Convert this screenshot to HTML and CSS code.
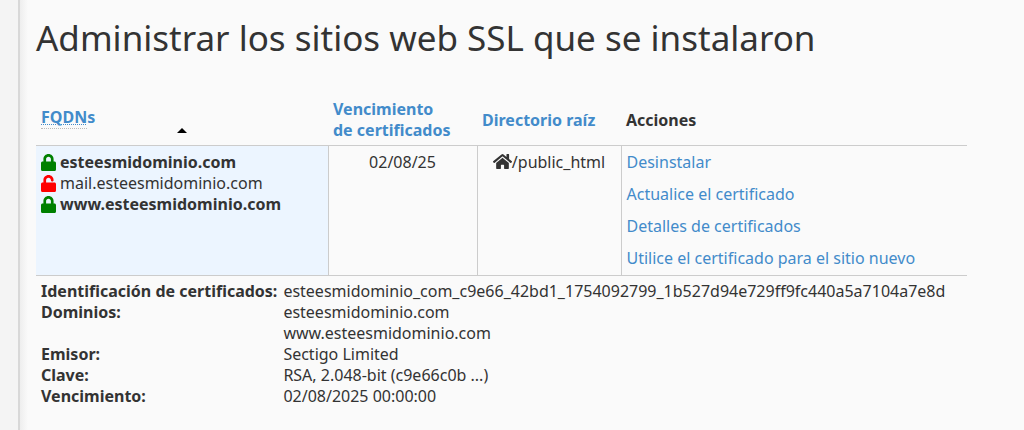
FILE: index.html
```html
<!DOCTYPE html>
<html lang="es">
<head>
  <meta charset="UTF-8">
  <title>Administrar los sitios web SSL</title>
  <link rel="stylesheet" href="styles.css">
</head>
<body>
  <!-- shared icons -->
  <svg class="sprite" aria-hidden="true">
    <symbol id="lock" viewBox="0 0 448 512" preserveAspectRatio="none">
      <path d="M400 224h-24v-72C376 68.200 307.800 0 224 0S72 68.200 72 152v72H48c-26.500 0-48 21.500-48 48v192c0 26.500 21.500 48 48 48h352c26.500 0 48-21.500 48-48V272c0-26.500-21.500-48-48-48zm-104 0H152v-72c0-39.700 32.300-72 72-72s72 32.300 72 72v72z"/>
    </symbol>
    <symbol id="unlock" viewBox="0 0 448 512" preserveAspectRatio="none">
      <path d="M400 224H152v-71c0-39.600 31.700-72.500 71.300-73 40-.5 72.700 32 72.700 72v16c0 13.300 10.700 24 24 24h32c13.300 0 24-10.700 24-24v-16C376 68 307.500-.3 223.500 0 139.500.3 72 69.500 72 153.500V224H48c-26.500 0-48 21.500-48 48v192c0 26.500 21.500 48 48 48h352c26.500 0 48-21.500 48-48V272c0-26.500-21.500-48-48-48z"/>
    </symbol>
    <symbol id="home" viewBox="0 0 576 512">
      <path d="M280.400 148.300 96 300.100V464a16 16 0 0 0 16 16l112-.3a16 16 0 0 0 16-16V368a16 16 0 0 1 16-16h64a16 16 0 0 1 16 16v95.600a16 16 0 0 0 16 16.100L464 480a16 16 0 0 0 16-16V300L295.700 148.300a12.200 12.200 0 0 0-15.300 0zM571.600 251.500 488 182.600V44.100a12 12 0 0 0-12-12h-56a12 12 0 0 0-12 12v72.600L318.500 43a48 48 0 0 0-61 0L4.300 251.500a12 12 0 0 0-1.600 16.900l25.500 31a12 12 0 0 0 16.900 1.600l235.300-193.700a12.200 12.200 0 0 1 15.300 0L531 301a12 12 0 0 0 16.900-1.600l25.500-31a12 12 0 0 0-1.800-16.900z"/>
    </symbol>
  </svg>

  <div class="page">
    <div class="sidebar"></div>
    <main class="content">
      <h1>Administrar los sitios web SSL que se instalaron</h1>
      <table class="hosts">
        <colgroup>
          <col class="col-fqdns">
          <col class="col-expires">
          <col class="col-docroot">
          <col>
        </colgroup>
        <thead>
          <tr>
            <th scope="col" aria-sort="ascending">
              <div class="sorted">
                <a href="#"><abbr title="Fully Qualified Domain Name">FQDN</abbr>s</a>
                <span class="arrow"></span>
              </div>
            </th>
            <th scope="col"><a href="#">Vencimiento<br>de certificados</a></th>
            <th scope="col"><a href="#">Directorio raíz</a></th>
            <th scope="col">Acciones</th>
          </tr>
        </thead>
        <tbody>
          <tr class="host">
            <td class="fqdns">
              <ul>
                <li class="secure"><svg class="icon"><use href="#lock"/></svg>esteesmidominio.com</li>
                <li class="insecure"><svg class="icon"><use href="#unlock"/></svg>mail.esteesmidominio.com</li>
                <li class="secure"><svg class="icon"><use href="#lock"/></svg>www.esteesmidominio.com</li>
              </ul>
            </td>
            <td class="expires">02/08/25</td>
            <td class="docroot"><svg class="home"><use href="#home"/></svg>/public_html</td>
            <td class="actions">
              <a href="#">Desinstalar</a>
              <a href="#">Actualice el certificado</a>
              <a href="#">Detalles de certificados</a>
              <a href="#">Utilice el certificado para el sitio nuevo</a>
            </td>
          </tr>
          <tr>
            <td class="details" colspan="4">
              <dl>
                <dt>Identificación de certificados:</dt>
                <dd>esteesmidominio_com_c9e66_42bd1_1754092799_1b527d94e729ff9fc440a5a7104a7e8d</dd>
                <dt>Dominios:</dt>
                <dd>esteesmidominio.com<br>www.esteesmidominio.com</dd>
                <dt>Emisor:</dt>
                <dd>Sectigo Limited</dd>
                <dt>Clave:</dt>
                <dd>RSA, 2.048-bit (c9e66c0b ...)</dd>
                <dt>Vencimiento:</dt>
                <dd>02/08/2025 00:00:00</dd>
              </dl>
            </td>
          </tr>
        </tbody>
      </table>
    </main>
  </div>
</body>
</html>
```
FILE: styles.css
```css
* {
  box-sizing: border-box;
}
body {
  margin: 0;
  background-color: #fafafa;
  color: #333;
  font-family: "Noto Sans", "Open Sans", sans-serif;
  font-size: 16px;
  line-height: 21px;
}
a {
  color: #428bca;
  text-decoration: none;
}
.sprite {
  display: none;
}

/* layout */
.page {
  display: flex;
  min-height: 100vh;
}
.sidebar {
  flex: 0 0 18px;
  background-color: #f4f4f4;
}
.content {
  flex: 1;
  min-width: 0;
  padding: 13px 57px 14px 16px;
  border-left: 2px solid #d8d8d8;
  background: linear-gradient(to right, #eee, #fafafa 8px);
}
h1 {
  margin: 0 0 33px;
  font-size: 35px;
  font-weight: 400;
  line-height: 50px;
}

/* table */
.hosts {
  width: 100%;
  table-layout: fixed;
  border-collapse: collapse;
}
.col-fqdns {
  width: 292px;
}
.col-expires {
  width: 149px;
}
.col-docroot {
  width: 144px;
}
th {
  padding: 3px 5px 4px;
  border-bottom: 1px solid #ccc;
  text-align: left;
  vertical-align: middle;
}
td {
  padding: 5px;
  vertical-align: top;
}
.sorted {
  display: flex;
  flex-direction: column;
  align-items: flex-start;
}
abbr {
  border-bottom: 1px dotted #bbb;
  text-decoration: underline dotted 1px;
}
.arrow {
  align-self: center;
  border: 5px solid transparent;
  border-top: 0;
  border-bottom-color: #000;
}
.host td {
  padding: 6px 5px;
  border-bottom: 1px solid #ccc;
}
.host td + td {
  border-left: 1px solid #ccc;
}
.host .fqdns {
  background-color: #ecf5ff;
}
.fqdns ul {
  margin: 0;
  padding: 0;
  list-style: none;
}
.fqdns li {
  display: flex;
  align-items: center;
  gap: 4px;
}
.icon {
  width: 15px;
  height: 17px;
}
.secure {
  font-weight: 700;
}
.secure .icon {
  fill: #008000;
}
.insecure .icon {
  fill: #f00;
}
.expires,
.docroot {
  text-align: center;
}
.home {
  width: 19px;
  height: 17px;
  fill: #333;
  vertical-align: -2px;
}
.actions a {
  display: block;
  margin-bottom: 11px;
}
.actions a:last-child {
  margin-bottom: 0;
}

/* certificate details */
dl {
  display: grid;
  grid-template-columns: max-content 1fr;
  column-gap: 6px;
  margin: 0;
}
dt {
  font-weight: 700;
}
dd {
  margin: 0;
}
```
